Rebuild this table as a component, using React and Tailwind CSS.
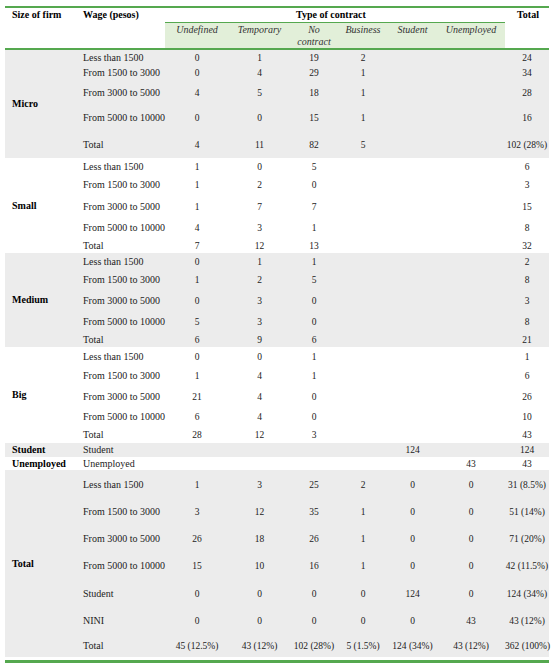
import React from "react";

const GRAY = "bg-[#ececec]";

const sections = [
  {
    label: "Micro",
    gray: true,
    rows: [
      ["h-[15px]", "Less than 1500", ["0", "1", "19", "2", "", "", "24"]],
      ["h-[16px]", "From 1500 to 3000", ["0", "4", "29", "1", "", "", "34"]],
      ["h-[23px]", "From 3000 to 5000", ["4", "5", "18", "1", "", "", "28"]],
      ["h-[27px]", "From 5000 to 10000", ["0", "0", "15", "1", "", "", "16"]],
      ["h-[27px]", "Total", ["4", "11", "82", "5", "", "", "102 (28%)"]],
    ],
  },
  {
    label: "Small",
    gray: false,
    rows: [
      ["h-[17px]", "Less than 1500", ["1", "0", "5", "", "", "", "6"]],
      ["h-[20px]", "From 1500 to 3000", ["1", "2", "0", "", "", "", "3"]],
      ["h-[23px]", "From 3000 to 5000", ["1", "7", "7", "", "", "", "15"]],
      ["h-[20px]", "From 5000 to 10000", ["4", "3", "1", "", "", "", "8"]],
      ["h-[15px]", "Total", ["7", "12", "13", "", "", "", "32"]],
    ],
  },
  {
    label: "Medium",
    gray: true,
    rows: [
      ["h-[17px]", "Less than 1500", ["0", "1", "1", "", "", "", "2"]],
      ["h-[20px]", "From 1500 to 3000", ["1", "2", "5", "", "", "", "8"]],
      ["h-[21px]", "From 3000 to 5000", ["0", "3", "0", "", "", "", "3"]],
      ["h-[21px]", "From 5000 to 10000", ["5", "3", "0", "", "", "", "8"]],
      ["h-[15px]", "Total", ["6", "9", "6", "", "", "", "21"]],
    ],
  },
  {
    label: "Big",
    gray: false,
    rows: [
      ["h-[19px]", "Less than 1500", ["0", "0", "1", "", "", "", "1"]],
      ["h-[20px]", "From 1500 to 3000", ["1", "4", "1", "", "", "", "6"]],
      ["h-[21px]", "From 3000 to 5000", ["21", "4", "0", "", "", "", "26"]],
      ["h-[20px]", "From 5000 to 10000", ["6", "4", "0", "", "", "", "10"]],
      ["h-[16px]", "Total", ["28", "12", "3", "", "", "", "43"]],
    ],
  },
  {
    label: "Student",
    gray: true,
    rows: [["h-[14px]", "Student", ["", "", "", "", "124", "", "124"]]],
  },
  {
    label: "Unemployed",
    gray: false,
    rows: [["h-[13px]", "Unemployed", ["", "", "", "", "", "43", "43"]]],
  },
  {
    label: "Total",
    gray: true,
    rows: [
      ["h-[29px]", "Less than 1500", ["1", "3", "25", "2", "0", "0", "31 (8.5%)"]],
      ["h-[26px]", "From 1500 to 3000", ["3", "12", "35", "1", "0", "0", "51 (14%)"]],
      ["h-[27px]", "From 3000 to 5000", ["26", "18", "26", "1", "0", "0", "71 (20%)"]],
      ["h-[28px]", "From 5000 to 10000", ["15", "10", "16", "1", "0", "0", "42 (11.5%)"]],
      ["h-[27px]", "Student", ["0", "0", "0", "0", "124", "0", "124 (34%)"]],
      ["h-[27px]", "NINI", ["0", "0", "0", "0", "0", "43", "43 (12%)"]],
      ["h-[23px]", "Total", ["45 (12.5%)", "43 (12%)", "102 (28%)", "5 (1.5%)", "124 (34%)", "43 (12%)", "362 (100%)"]],
    ],
  },
];

const contractTypes = ["Undefined", "Temporary", null, "Business", "Student", "Unemployed"];

export default function App() {
  return (
    <div className="bg-white w-[554px] h-[670px] pt-[6px] pl-[5px] font-['Liberation_Serif',serif] text-[10px] leading-[12px] text-[#222]">
      <table className="table-fixed border-separate border-spacing-0 w-[544px]">
        <colgroup>
          <col className="w-[73px]" />
          <col className="w-[87px]" />
          <col className="w-[64px]" />
          <col className="w-[61px]" />
          <col className="w-[48px]" />
          <col className="w-[50px]" />
          <col className="w-[49px]" />
          <col className="w-[68px]" />
          <col className="w-[44px]" />
        </colgroup>
        <tbody>
          {/* top rule */}
          <tr className="h-[2px]">
            <td colSpan={9} className="p-0 bg-[#55a84f]" />
          </tr>
          <tr className="h-[14px]">
            <td className="p-0 pl-[7px] font-bold text-black align-middle">Size of firm</td>
            <td className="p-0 pl-[5px] font-bold text-black align-middle">Wage (pesos)</td>
            <td colSpan={6} className="p-0 pr-[8px] font-bold text-black text-center align-middle">
              Type of contract
            </td>
            <td className="p-0 pl-[2px] font-bold text-black text-center align-middle">Total</td>
          </tr>
          <tr className="h-[26px]">
            <td className="p-0" />
            <td className="p-0" />
            {contractTypes.map((c, i) => (
              <td
                key={i}
                className="p-0 pt-[1px] align-top text-center italic text-[#333] bg-[#e2efd9] border-t border-[#55a84f]"
              >
                {c === null ? (
                  <>
                    No
                    <br />
                    contract
                  </>
                ) : (
                  c
                )}
              </td>
            ))}
            <td className="p-0" />
          </tr>
          <tr className="h-[2px]">
            <td colSpan={9} className="p-0 bg-[#55a84f]" />
          </tr>

          {sections.map((s) =>
            s.rows.map(([h, wage, vals], ri) => (
              <tr key={s.label + ri} className={`${h} ${s.gray ? GRAY : "bg-white"}`}>
                {ri === 0 && (
                  <td
                    rowSpan={s.rows.length}
                    className="p-0 pl-[7px] font-bold text-black align-middle"
                  >
                    {s.label}
                  </td>
                )}
                <td className="p-0 pl-[5px] align-middle whitespace-nowrap">{wage}</td>
                {vals.map((v, vi) => (
                  <td
                    key={vi}
                    className="p-0 text-center align-middle whitespace-nowrap text-[9.5px]"
                  >
                    {v}
                  </td>
                ))}
              </tr>
            ))
          )}

          <tr className="h-[3px]">
            <td colSpan={9} className="p-0" />
          </tr>
          {/* bottom rule */}
          <tr className="h-[3px]">
            <td colSpan={9} className="p-0 bg-[#55a84f]" />
          </tr>
        </tbody>
      </table>
    </div>
  );
}
